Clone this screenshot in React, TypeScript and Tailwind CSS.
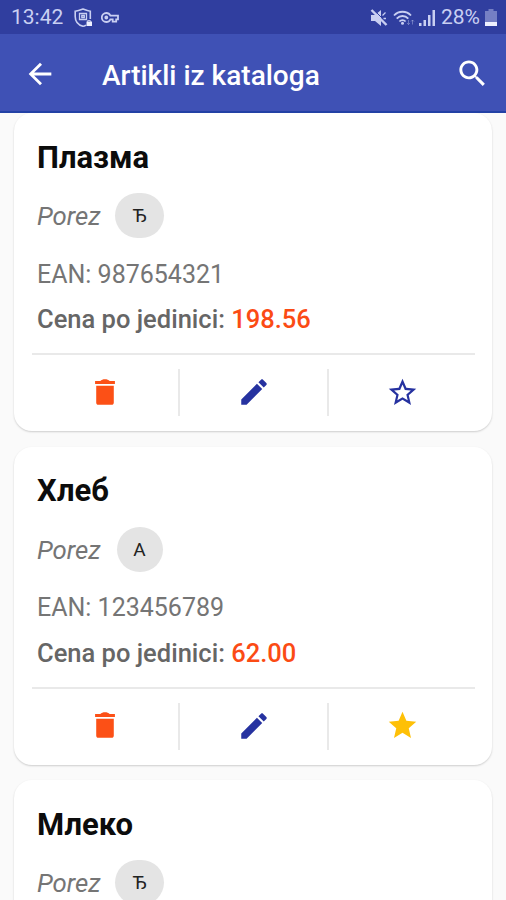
interface Article {
  name: string;
  tax: string;
  favorite: boolean;
  wideChip: boolean;
  ean?: string;
  price?: string;
}

const articles: Article[] = [
  { name: "Плазма", tax: "Ђ", ean: "987654321", price: "198.56", favorite: false, wideChip: true },
  { name: "Хлеб", tax: "А", ean: "123456789", price: "62.00", favorite: true, wideChip: false },
  { name: "Млеко", tax: "Ђ", favorite: false, wideChip: true },
];

const icons = {
  back: "M20 11H7.83l5.59-5.59L12 4l-8 8 8 8 1.41-1.41L7.83 13H20v-2z",
  search:
    "M15.5 14h-.79l-.28-.27C15.41 12.59 16 11.11 16 9.5 16 5.91 13.09 3 9.5 3S3 5.91 3 9.5 5.91 16 9.5 16c1.61 0 3.09-.59 4.23-1.57l.27.28v.79l5 4.99L20.49 19l-4.99-5zm-6 0C7.01 14 5 11.99 5 9.5S7.01 5 9.5 5 14 7.01 14 9.5 11.99 14 9.5 14z",
  trash:
    "M5.800 7.500h12.400V19.500c0 .9-.6 1.500-1.500 1.500H7.300c-.9 0-1.500-.6-1.500-1.500zM5 4.200h3.700C9.500 3.400 10.600 3 12 3s2.500.4 3.300 1.200H19v2.100H5z",
  pencil:
    "M3 17.25V21h3.75L17.81 9.94l-3.75-3.75L3 17.25zM20.71 7.04c.39-.39.39-1.02 0-1.41l-2.34-2.34c-.39-.39-1.02-.39-1.41 0l-1.83 1.83 3.75 3.75 1.83-1.83z",
  star: "M12 17.27L18.18 21l-1.64-7.03L22 9.24l-7.19-.61L12 2 9.19 8.63 2 9.24l5.46 4.73L5.82 21z",
  starOutline:
    "M22 9.24l-7.19-.62L12 2 9.19 8.63 2 9.24l5.46 4.73L5.82 21 12 17.27 18.18 21l-1.63-7.03L22 9.24zM12 15.4l-3.76 2.27 1-4.28-3.32-2.88 4.38-.38L12 6.1l1.71 4.04 4.38.38-3.32 2.88 1 4.28L12 15.4z",
};

function Icon({ path, className }: { path: string; className: string }) {
  return (
    <svg viewBox="0 0 24 24" fill="currentColor" className={className}>
      <path d={path} />
    </svg>
  );
}

function StatusBar() {
  return (
    <div className="flex h-[34px] items-center bg-[#303e9f] pt-px pr-[9px] pl-[11px] text-[#c9cff2]">
      <span className="w-[53px] text-[21px] leading-none whitespace-nowrap">13:42</span>
      <svg viewBox="0 0 19 20" className="ml-[10px] h-5 w-[19px]" fill="none" stroke="currentColor" strokeWidth="1.6">
        <path d="M12 17.200C10.800 18 9.500 18.300 9 18.300 4.500 17 1.200 13.800 1.200 8.500V3.200C4 3 6.500 2 9 1c2.500 1 5 2 7.300 2.200V11" />
        <path d="M5.500 5.500h7v6h-7zM7.800 7.500h2.500v2H7.800z" strokeWidth="1.300" />
        <path d="M12.500 13.500h5.500v4.500h-5.500z" fill="#eef0ff" stroke="none" />
        <path d="M13.600 14v-1.400h2.800V14" strokeWidth="1" />
      </svg>
      <svg viewBox="0 0 18 12" className="ml-2 h-3 w-[18px]" fill="none" stroke="currentColor" strokeWidth="1.8">
        <path d="M9.400 3.700C8.600 2 7 1 5.300 1a4.500 4.500 0 0 0 0 9c1.700 0 3.300-1 4.100-2.700h2.300v2.400h3.500V7.300H17V3.700z" />
        <circle cx="5.300" cy="5.500" r="1" />
      </svg>
      <svg viewBox="0 0 18 18" className="ml-auto h-[18px] w-[18px]" fill="currentColor">
        <path d="M1 6h4l6-5v16l-6-5H1z" />
        <path d="M4 1l13 13" stroke="#303e9f" strokeWidth="1" />
        <path d="M1.500 1L16.500 16" stroke="currentColor" strokeWidth="2.400" />
        <path d="M12.500 6.500l3-3M13.500 9.500H16" stroke="currentColor" strokeWidth="1.300" />
      </svg>
      <svg viewBox="0 0 22 16" className="ml-[5px] h-4 w-[22px]" fill="none" stroke="currentColor" strokeWidth="1.8">
        <path d="M1 5.500C5.500.5 13.500.5 18 5.500M3.700 8.700c3.300-3.600 8.300-3.600 11.600 0M6.400 11.500c1.800-1.900 4.400-1.900 6.200 0" />
        <circle cx="9.500" cy="13.300" r="1.500" fill="currentColor" stroke="none" />
        <path d="M15.500 10v4.500M14 13l1.500 1.500L17 13M19.500 14.500V10M18 11.500l1.500-1.500 1.500 1.500" strokeWidth="1" opacity=".4" />
      </svg>
      <svg viewBox="0 0 17 17" className="ml-1 h-[17px] w-[17px]" fill="currentColor">
        <path d="M0 14h2.500v3H0zM4.500 11H7v6H4.500zM9 6h2.500v11H9zM13.500 1H16v16h-2.500z" />
      </svg>
      <span className="ml-[5px] w-[40px] text-[21px] leading-none whitespace-nowrap">28%</span>
      <svg viewBox="0 0 12 17" className="ml-1 h-[17px] w-3" fill="currentColor">
        <path d="M3.500 0h5v2H12v11H0V2h3.500z" opacity=".45" />
        <path d="M0 13h12v4H0z" fill="#eef0ff" />
      </svg>
    </div>
  );
}

function AppBar() {
  return (
    <header className="flex h-[79px] items-center border-b-2 border-[#2341a5] bg-[#3f51b5] pt-[2px] pr-[16px] pl-[23px] text-white">
      <Icon path={icons.back} className="h-[34px] w-[34px]" />
      <h1 className="mt-[5px] ml-[45px] text-[28px] leading-none font-medium whitespace-nowrap">Artikli iz kataloga</h1>
      <Icon path={icons.search} className="-mt-px ml-auto h-[35px] w-[35px]" />
    </header>
  );
}

function ArticleCard({ article }: { article: Article }) {
  return (
    <article className="h-[318px] rounded-[18px] bg-white px-[18px] pt-[28.500px] shadow-[0_1px_2px_rgba(0,0,0,0.18)]">
      <h2 className="pl-[5px] text-[31px] leading-8 font-bold text-[#0c0c0c]">{article.name}</h2>
      <div className="mt-[19.500px] flex h-[45px] items-center pl-[5px]">
        <span className="w-[78px] pt-[3px] text-[25.750px] leading-none text-[#757575] italic">Porez</span>
        <span className="flex w-[49px] justify-center">
          <span
            className={`flex h-[45px] items-center justify-center rounded-full bg-[#e4e4e4] text-[19px] leading-none text-[#222] ${
              article.wideChip ? "w-[49px]" : "w-[46px]"
            }`}
          >
            {article.tax}
          </span>
        </span>
      </div>
      {article.ean && (
        <p className="mt-[20.500px] pl-[5px] text-[25px] leading-8 text-[#757575]">EAN: {article.ean}</p>
      )}
      {article.price && (
        <>
          <p className="mt-[12.500px] pl-[5px] text-[25.500px] leading-8 font-medium text-[#666]">
            Cena po jedinici: <span className="text-[#fb4b14]">{article.price}</span>
          </p>
          <div className="mt-[18px] -mr-px grid grid-cols-[148px_149px_1fr] border-t-2 border-[#e9e9e9] pt-[14px]">
            <div className="flex h-[47px] items-center justify-center border-r-2 border-[#e9e9e9] pb-[2px]">
              <Icon path={icons.trash} className="h-[34px] w-[34px] text-[#fc5016]" />
            </div>
            <div className="flex h-[47px] items-center justify-center border-r-2 border-[#e9e9e9] pb-px">
              <Icon path={icons.pencil} className="h-[34px] w-[34px] text-[#2632a0]" />
            </div>
            <div className="flex h-[47px] items-center justify-center pb-px">
              {article.favorite ? (
                <Icon path={icons.star} className="h-[33px] w-[33px] text-[#fec007]" />
              ) : (
                <Icon path={icons.starOutline} className="h-[33px] w-[33px] text-[#2632a0]" />
              )}
            </div>
          </div>
        </>
      )}
    </article>
  );
}

export default function App() {
  return (
    <div className="flex h-[900px] w-[506px] flex-col overflow-hidden bg-[#fafafa] font-[Roboto,sans-serif]">
      <StatusBar />
      <AppBar />
      <main className="flex min-h-0 flex-1 flex-col gap-[15.500px] overflow-hidden px-[14px]">
        {articles.map((article) => (
          <div key={article.name} className="shrink-0">
            <ArticleCard article={article} />
          </div>
        ))}
      </main>
    </div>
  );
}
